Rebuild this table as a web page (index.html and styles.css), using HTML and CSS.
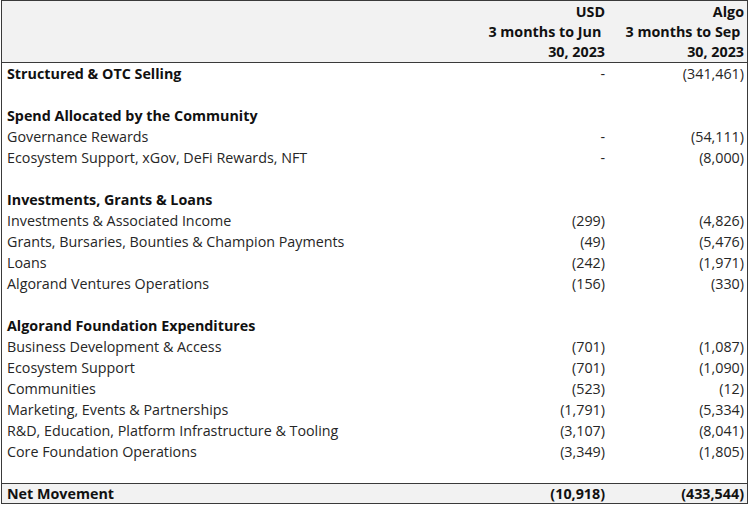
FILE: index.html
```html
<!DOCTYPE html>
<html lang="en">
<head>
<meta charset="utf-8">
<title>Algorand Foundation – Spend Summary</title>
<link rel="stylesheet" href="styles.css">
</head>
<body>
<div class="sheet">
  <div class="row head">
    <div class="cell label"></div>
    <div class="cell num">USD<br>3 months to Jun&nbsp;<br>30, 2023</div>
    <div class="cell num last">Algo<br>3 months to Sep&nbsp;<br>30, 2023</div>
  </div>

  <div class="row bold"><div class="cell label">Structured &amp; OTC Selling</div><div class="cell num">-</div><div class="cell num last">(341,461)</div></div>
  <div class="row"><div class="cell label"></div><div class="cell num"></div><div class="cell num last"></div></div>
  <div class="row section"><div class="cell label">Spend Allocated by the Community</div><div class="cell num"></div><div class="cell num last"></div></div>
  <div class="row"><div class="cell label">Governance Rewards</div><div class="cell num">-</div><div class="cell num last">(54,111)</div></div>
  <div class="row"><div class="cell label">Ecosystem Support, xGov, DeFi Rewards, NFT</div><div class="cell num">-</div><div class="cell num last">(8,000)</div></div>
  <div class="row"><div class="cell label"></div><div class="cell num"></div><div class="cell num last"></div></div>
  <div class="row section"><div class="cell label">Investments, Grants &amp; Loans</div><div class="cell num"></div><div class="cell num last"></div></div>
  <div class="row"><div class="cell label">Investments &amp; Associated Income</div><div class="cell num">(299)</div><div class="cell num last">(4,826)</div></div>
  <div class="row"><div class="cell label">Grants, Bursaries, Bounties &amp; Champion Payments</div><div class="cell num">(49)</div><div class="cell num last">(5,476)</div></div>
  <div class="row"><div class="cell label">Loans</div><div class="cell num">(242)</div><div class="cell num last">(1,971)</div></div>
  <div class="row"><div class="cell label">Algorand Ventures Operations</div><div class="cell num">(156)</div><div class="cell num last">(330)</div></div>
  <div class="row"><div class="cell label"></div><div class="cell num"></div><div class="cell num last"></div></div>
  <div class="row section"><div class="cell label">Algorand Foundation Expenditures</div><div class="cell num"></div><div class="cell num last"></div></div>
  <div class="row"><div class="cell label">Business Development &amp; Access</div><div class="cell num">(701)</div><div class="cell num last">(1,087)</div></div>
  <div class="row"><div class="cell label">Ecosystem Support</div><div class="cell num">(701)</div><div class="cell num last">(1,090)</div></div>
  <div class="row"><div class="cell label">Communities</div><div class="cell num">(523)</div><div class="cell num last">(12)</div></div>
  <div class="row"><div class="cell label">Marketing, Events &amp; Partnerships</div><div class="cell num">(1,791)</div><div class="cell num last">(5,334)</div></div>
  <div class="row"><div class="cell label">R&amp;D, Education, Platform Infrastructure &amp; Tooling</div><div class="cell num">(3,107)</div><div class="cell num last">(8,041)</div></div>
  <div class="row"><div class="cell label">Core Foundation Operations</div><div class="cell num">(3,349)</div><div class="cell num last">(1,805)</div></div>
  <div class="row"><div class="cell label"></div><div class="cell num"></div><div class="cell num last"></div></div>

  <div class="row total"><div class="cell label">Net Movement</div><div class="cell num">(10,918)</div><div class="cell num last">(433,544)</div></div>
</div>
</body>
</html>
```
FILE: styles.css
```css
html, body {
  margin: 0;
  padding: 0;
  background: #ffffff;
}

body {
  font-family: "Open Sans", "Liberation Sans", sans-serif;
  font-size: 14.3px;
  color: #262626;
}

.sheet {
  margin-left: 1px;
  width: 747px;
  box-sizing: border-box;
  border: 1px solid #3a3a3a;
}

.row {
  display: grid;
  grid-template-columns: 468px 139px 138px;
  height: 21px;
  line-height: 21px;
  white-space: nowrap;
}

.cell.label {
  padding-left: 5px;
}

.cell.num {
  text-align: right;
  padding-right: 4px;
}

.cell.num.last {
  padding-right: 3px;
}

.head {
  height: auto;
  line-height: 20px;
  padding-top: 1px;
  background: #f2f2f2;
  border-bottom: 1px solid #3a3a3a;
  font-weight: 700;
  color: #111111;
}

.bold,
.section {
  font-weight: 700;
  color: #111111;
}

.bold .cell.num {
  font-weight: 400;
  color: #262626;
}

.total {
  height: 19px;
  line-height: 19px;
  background: #f2f2f2;
  border-top: 1px solid #3a3a3a;
  font-weight: 700;
  color: #111111;
}
```
